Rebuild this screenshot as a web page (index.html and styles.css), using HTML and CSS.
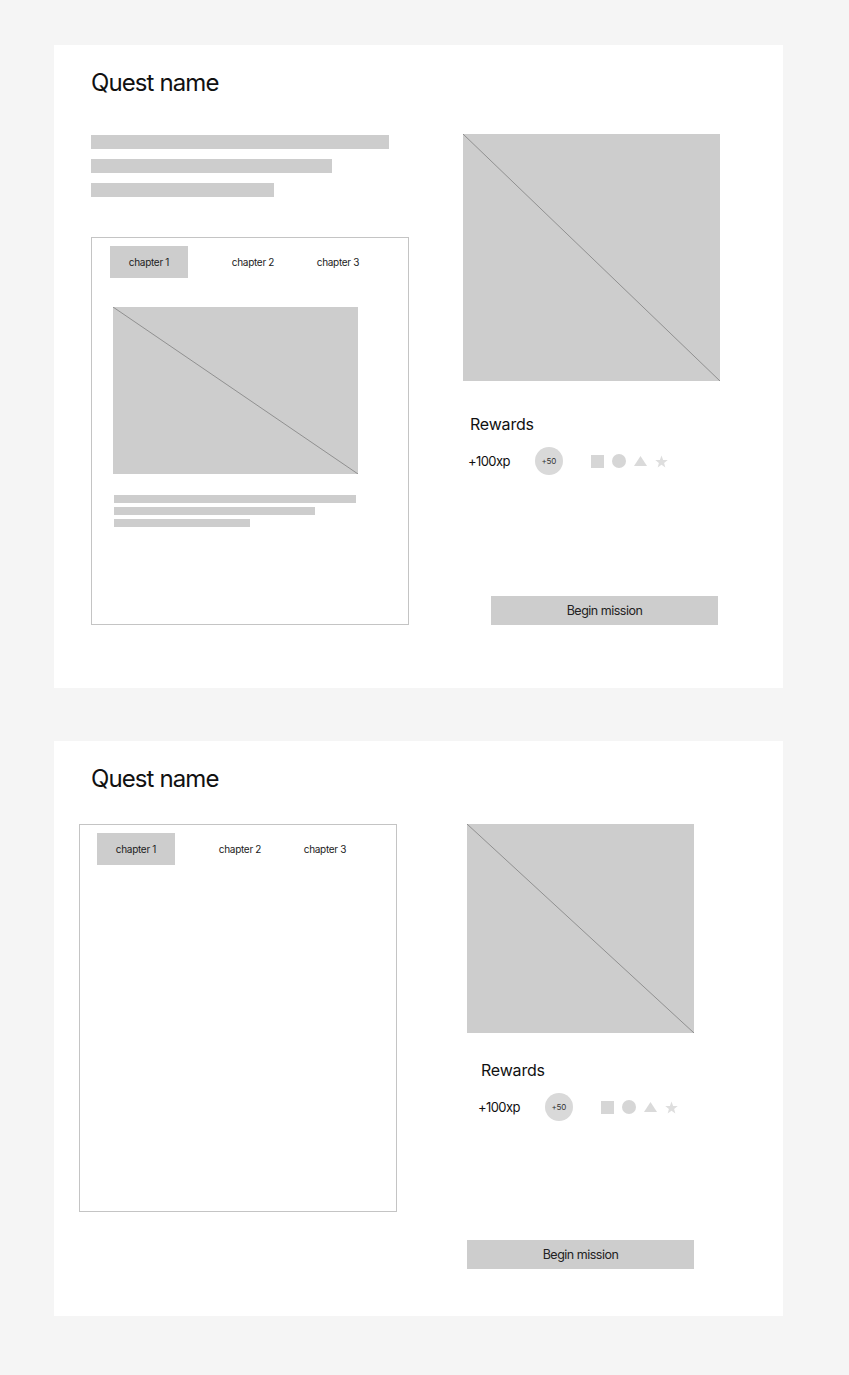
FILE: index.html
```html
<!DOCTYPE html>
<html>
  <head>
    <title>Quest</title>
    <link rel="stylesheet" href="styles.css">
  </head>
  <body>
    <div class="page">

      <!-- layout A: description + chapter panel, rewards and button on the right -->
      <section class="card card-a">
        <h1 class="quest-title">Quest name</h1>

        <div class="left-col">
          <div class="desc">
            <div class="bar bar-lg" style="width: 298px"></div>
            <div class="bar bar-lg" style="width: 241px"></div>
            <div class="bar bar-lg" style="width: 183px"></div>
          </div>

          <div class="chapters">
            <div class="tabs">
              <div class="tab active">chapter 1</div>
              <div class="tab tab-2">chapter 2</div>
              <div class="tab tab-3">chapter 3</div>
            </div>
            <svg class="ph ph-chapter" viewBox="0 0 100 100" preserveAspectRatio="none">
              <rect width="100" height="100" fill="#cdcdcd"/>
              <line x1="0" y1="0" x2="100" y2="100" stroke="#909090" stroke-width="1" vector-effect="non-scaling-stroke"/>
            </svg>
            <div class="chapter-text">
              <div class="bar bar-sm" style="width: 242px"></div>
              <div class="bar bar-sm" style="width: 201px"></div>
              <div class="bar bar-sm" style="width: 136px"></div>
            </div>
          </div>
        </div>

        <div class="right-col">
          <svg class="ph ph-cover" viewBox="0 0 100 100" preserveAspectRatio="none">
            <rect width="100" height="100" fill="#cdcdcd"/>
            <line x1="0" y1="0" x2="100" y2="100" stroke="#909090" stroke-width="1" vector-effect="non-scaling-stroke"/>
          </svg>
          <h2 class="rewards-title">Rewards</h2>
          <div class="rewards">
            <span class="xp">+100xp</span>
            <span class="coin">+50</span>
            <span class="items">
              <svg width="13" height="13"><rect width="13" height="13" fill="#d6d6d6"/></svg>
              <svg width="14" height="14"><circle cx="7" cy="7" r="7" fill="#d6d6d6"/></svg>
              <svg width="13" height="10"><polygon points="6.5,0 13,10 0,10" fill="#dadada"/></svg>
              <svg width="13" height="13" viewBox="0 0 24 24"><polygon points="12,1 15,9 23.5,9.3 16.8,14.6 19.1,23 12,18.2 4.9,23 7.2,14.6 0.5,9.3 9,9" fill="#dedede"/></svg>
            </span>
          </div>
          <button class="begin">Begin mission</button>
        </div>
      </section>

      <!-- layout B: chapter panel only, button below -->
      <section class="card card-b">
        <h1 class="quest-title">Quest name</h1>

        <div class="left-col">
          <div class="chapters">
            <div class="tabs">
              <div class="tab active">chapter 1</div>
              <div class="tab tab-2">chapter 2</div>
              <div class="tab tab-3">chapter 3</div>
            </div>
          </div>
        </div>

        <div class="right-col">
          <svg class="ph ph-cover" viewBox="0 0 100 100" preserveAspectRatio="none">
            <rect width="100" height="100" fill="#cdcdcd"/>
            <line x1="0" y1="0" x2="100" y2="100" stroke="#909090" stroke-width="1" vector-effect="non-scaling-stroke"/>
          </svg>
          <h2 class="rewards-title">Rewards</h2>
          <div class="rewards">
            <span class="xp">+100xp</span>
            <span class="coin">+50</span>
            <span class="items">
              <svg width="13" height="13"><rect width="13" height="13" fill="#d6d6d6"/></svg>
              <svg width="14" height="14"><circle cx="7" cy="7" r="7" fill="#d6d6d6"/></svg>
              <svg width="13" height="10"><polygon points="6.5,0 13,10 0,10" fill="#dadada"/></svg>
              <svg width="13" height="13" viewBox="0 0 24 24"><polygon points="12,1 15,9 23.5,9.3 16.8,14.6 19.1,23 12,18.2 4.9,23 7.2,14.6 0.5,9.3 9,9" fill="#dedede"/></svg>
            </span>
          </div>
        </div>

        <button class="begin">Begin mission</button>
      </section>

    </div>
  </body>
</html>
```

FILE: styles.css
```css
body {
  margin: 0;
  background-color: #f5f5f5;
  font-family: Inter, "Liberation Sans", Arial, sans-serif;
  color: #111;
}

.page {
  padding: 45px 0 59px 54px;
  display: flex;
  flex-direction: column;
  gap: 53px;
}

.card {
  width: 729px;
  box-sizing: border-box;
  background-color: #fff;
  display: grid;
  align-items: start;
}

.quest-title {
  grid-column: 1 / 3;
  margin: 0;
  padding-top: 2px;
  height: 27px;
  font-size: 24px;
  font-weight: 400;
  line-height: 29px;
  letter-spacing: -0.9px;
}

/* layout A */
.card-a {
  padding: 21px 0 63px 37px;
  grid-template-columns: 318px 257px;
  column-gap: 54px;
  row-gap: 39px;
  align-items: stretch;
}

/* layout B */
.card-b {
  padding: 21px 0 47px 25px;
  grid-template-columns: 318px 227px;
  column-gap: 70px;
  row-gap: 33px;
}

.card-b .quest-title {
  margin-left: 12px;
}

.left-col,
.right-col {
  display: flex;
  flex-direction: column;
}

.bar {
  background-color: #cdcdcd;
}

.desc {
  display: flex;
  flex-direction: column;
  gap: 10px;
  margin-top: 1px;
  margin-bottom: 40px;
}

.bar-lg {
  height: 14px;
}

.bar-sm {
  height: 8px;
}

.chapters {
  height: 388px;
  box-sizing: border-box;
  border: 1px solid #c4c4c4;
  padding: 8px 0 0 18px;
}

.card-b .chapters {
  padding-left: 17px;
}

.tabs {
  display: flex;
}

.tab {
  width: 78px;
  height: 32px;
  display: flex;
  align-items: center;
  justify-content: center;
  font-size: 10px;
  letter-spacing: -0.3px;
  color: #222;
}

.tab.active {
  background-color: #cdcdcd;
}

.tab-2 {
  margin-left: 26px;
}

.tab-3 {
  margin-left: 7px;
}

.ph {
  display: block;
}

.ph-chapter {
  width: 245px;
  height: 167px;
  margin: 29px 0 0 3px;
}

.chapter-text {
  display: flex;
  flex-direction: column;
  gap: 4px;
  margin: 21px 0 0 4px;
}

.card-a .ph-cover {
  width: 257px;
  height: 247px;
}

.card-b .ph-cover {
  width: 227px;
  height: 209px;
}

.rewards-title {
  margin: 34px 0 0 7px;
  font-size: 16px;
  font-weight: 400;
  line-height: 19px;
  letter-spacing: -0.2px;
}

.card-b .rewards-title {
  margin-top: 28px;
  margin-left: 14px;
}

.rewards {
  display: flex;
  align-items: center;
  margin: 13px 0 0 5px;
}

.card-b .rewards {
  margin-left: 11px;
}

.xp {
  font-size: 13px;
  letter-spacing: -0.6px;
}

.coin {
  width: 28px;
  height: 28px;
  border-radius: 50%;
  background-color: #d9d9d9;
  margin-left: 25px;
  display: flex;
  align-items: center;
  justify-content: center;
  font-size: 8px;
  letter-spacing: -0.3px;
  color: #333;
}

.items {
  display: flex;
  align-items: center;
  gap: 8px;
  margin-left: 28px;
}

.items svg {
  display: block;
}

.begin {
  width: 227px;
  height: 29px;
  border: none;
  background-color: #cdcdcd;
  font-family: inherit;
  font-size: 12.5px;
  letter-spacing: -0.5px;
  color: #222;
  padding: 0;
}

.card-a .begin {
  margin-top: auto;
  margin-left: 28px;
}

.card-b .begin {
  grid-column: 2;
  margin-top: -5px;
}
```
